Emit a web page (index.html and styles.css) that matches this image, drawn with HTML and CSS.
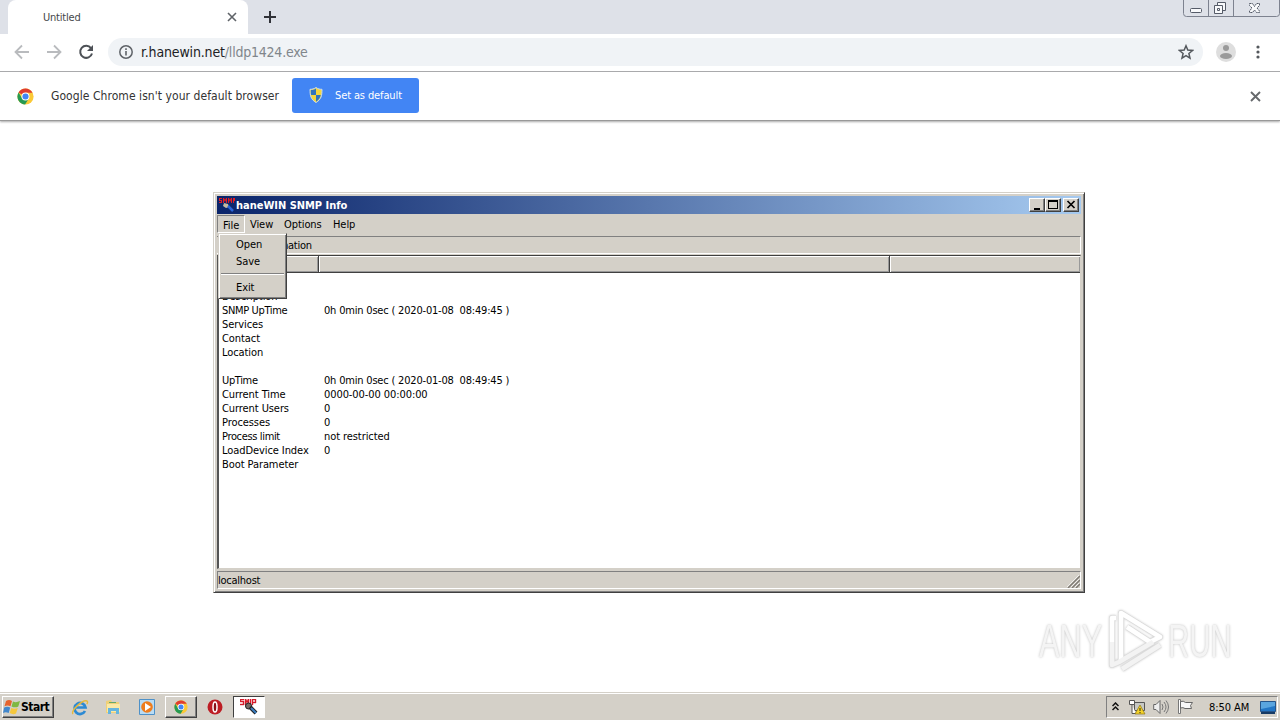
FILE: index.html
```html
<!DOCTYPE html>
<html lang="en">
  <head>
    <meta charset="UTF-8" />
    <title>Untitled</title>
    <link rel="stylesheet" href="styles.css">
  </head>
  <body>
    <div class="browser">
      <div class="tabs">
        <div class="tab">
          <span class="tab-title">Untitled</span>
          <svg class="tab-close" width="10" height="10" viewBox="0 0 10 10"><path d="M1 1l8 8M9 1l-8 8" stroke="#5f6368" stroke-width="1.6" /></svg>
        </div>
        <svg class="new-tab" width="12" height="12" viewBox="0 0 12 12"><path d="M6 0v12M0 6h12" stroke="#303238" stroke-width="2" /></svg>
        <div class="caption">
          <svg width="97" height="17" viewBox="0 0 97 17">
            <path d="M.5 0v13.500q0 3 3 3h90q3 0 3-3V0M25.500 0v16M50.500 0v16" fill="none" stroke="#7d828f" />
            <g fill="#f8f9fb" stroke="#555b68">
              <rect x="7.500" y="8.500" width="11" height="4" rx="1" />
              <path d="M34.500 2.500h8v8h-8z" /><path d="M31.500 5.500h8v8h-8z" /><path d="M34.500 8.500h2v2h-2z" />
              <path d="M66.500 3.500h3l2 3 2-3h3v2l-2.500 2.500 2.500 3v1.500h-3l-2-2.500-2 2.500h-3V11l2.500-3-2.500-2.500z" stroke-dasharray="2 .6" />
            </g>
          </svg>
        </div>
      </div>

      <div class="toolbar">
        <svg class="back" width="16" height="16" viewBox="0 0 16 16"><path d="M15 8H2M8 1.500L1.500 8 8 14.500" fill="none" stroke="#b9bbbe" stroke-width="1.800" /></svg>
        <svg class="forward" width="16" height="16" viewBox="0 0 16 16"><path d="M1 8h13M8 1.500L14.500 8 8 14.500" fill="none" stroke="#b9bbbe" stroke-width="1.800" /></svg>
        <svg class="reload" width="16" height="16" viewBox="0 0 16 16"><path d="M13 4.200A6 6 0 1 0 14 9.500" fill="none" stroke="#4d5156" stroke-width="2" /><path d="M15 1v6H9z" fill="#4d5156" /></svg>
        <div class="address">
          <svg width="14" height="14" viewBox="0 0 14 14"><circle cx="7" cy="7" r="6.200" fill="none" stroke="#5f6368" stroke-width="1.500" /><path d="M7 6v4.500M7 3.300v1.600" stroke="#5f6368" stroke-width="1.600" /></svg>
          <span class="host">r.hanewin.net</span><span class="path">/lldp1424.exe</span>
          <svg class="star" width="16" height="16" viewBox="0 0 16 16"><path d="M8 1.800l1.800 4.300 4.700.4-3.600 3 1.100 4.600L8 11.700l-4 2.400 1.100-4.600-3.600-3 4.700-.4z" fill="none" stroke="#54585d" stroke-width="1.500" /></svg>
        </div>
        <svg class="avatar" width="20" height="20" viewBox="0 0 20 20"><circle cx="10" cy="10" r="10" fill="#dedede" /><circle cx="10" cy="6" r="3" fill="#9a9a9a" /><ellipse cx="10" cy="14" rx="6" ry="3" fill="#9a9a9a" /></svg>
        <svg class="dots" width="4" height="14" viewBox="0 0 4 14"><g fill="#54585d"><circle cx="2" cy="2" r="1.600" /><circle cx="2" cy="7" r="1.600" /><circle cx="2" cy="12" r="1.600" /></g></svg>
      </div>

      <div class="infobar">
        <svg class="logo" width="17" height="17" viewBox="0 0 20 20">
          <circle cx="10" cy="10" r="9.500" fill="#fbc936" />
          <path d="M10 10L1.800 5.200A9.500 9.500 0 0 1 18.200 5.500H10z" fill="#df3c30" />
          <path d="M1.800 5.200A9.500 9.500 0 0 0 9.500 19.500L13.900 12.300 10 10 6 12z" fill="#269a52" />
          <circle cx="10" cy="10" r="4.700" fill="#fff" /><circle cx="10" cy="10" r="3.600" fill="#4285f4" />
        </svg>
        <span class="message">Google Chrome isn't your default browser</span>
        <div class="default-button">
          <svg width="14" height="16" viewBox="0 0 14 16">
            <path d="M7 .5c2 1.500 4 1.800 6 1.800 0 6-.5 10-6 13.200C1.500 12.300 1 8.300 1 2.300c2 0 4-.3 6-1.800z" fill="#f5d63d" stroke="#c8dcec" />
            <path d="M7 1.500C5.500 2.500 3.500 3 1.800 3c0 2 0 3.500.4 5H7zM7 8h4.800c-.7 3-2 5-4.800 6.700z" fill="#3274bd" />
          </svg>
          <span>Set as default</span>
        </div>
        <svg class="info-close" width="11" height="11" viewBox="0 0 11 11"><path d="M1 1l9 9M10 1l-9 9" stroke="#66696c" stroke-width="1.900" /></svg>
      </div>
    </div>

    <div class="watermark">
      <span class="any">ANY</span>
      <svg width="60" height="66" viewBox="0 0 60 66">
        <g fill="none" stroke-linejoin="round">
          <path d="M13 54V5l39 24-10 5L19 19M8 10H4v47l7-3 34-20M14 61l38-24" stroke="#dcdcdc" stroke-width="6" />
          <path d="M13 54V5l39 24-10 5L19 19M8 10H4v24" stroke="#fff" stroke-width="4.500" />
          <path d="M4 34v23l7-3 34-20M14 61l38-24" stroke="#f3f3f3" stroke-width="4.500" />
        </g>
      </svg>
      <span class="run">RUN</span>
    </div>

    <div class="window">
      <div class="title-bar">
        <svg class="snmp" width="16" height="16" viewBox="0 0 16 16">
          <path d="M0 1h3v1H1v1h2v3H0V5h2V4H0zM4 6V1h1l1 2 1-2h1v5H7V3L6 5 5 3v3zM9 1h1l1 2 1-2h1v5h-1V3l-1 2-1-2v3H9zM14 1h2v3h-1v2h-1z" fill="#e31b23" />
          <path d="M5 6l4 1 1 3-3 1-3-2z" fill="#c6b9a0" /><path d="M9 9l5 5" stroke="#2b64d8" stroke-width="2.500" />
        </svg>
        <span class="title-text">haneWIN SNMP Info</span>
        <div class="control"><svg width="14" height="12"><path d="M4 9h6v2H4z" /></svg></div>
        <div class="control"><svg width="14" height="12"><path d="M2 1h10v9H2zM3 3v6h8V3z" fill-rule="evenodd" /></svg></div>
        <div class="control close"><svg width="14" height="12"><path d="M3.500 2l7 7M10.500 2l-7 7" stroke="#000" stroke-width="1.700" /></svg></div>
      </div>

      <div class="menu-bar">
        <span class="menu-item active">File</span>
        <span class="menu-item view">View</span>
        <span class="menu-item options">Options</span>
        <span class="menu-item help">Help</span>
      </div>

      <div class="caption-row"><span>System Information</span></div>

      <div class="list">
        <div class="list-header"><div></div><div></div><div></div></div>
        <div class="rows">
          <div class="row"></div>
          <div class="row"><span>Description</span></div>
          <div class="row"><span class="narrow">SNMP UpTime</span><span class="stamp">0h 0min 0sec ( 2020-01-08&nbsp; 08:49:45 )</span></div>
          <div class="row"><span>Services</span></div>
          <div class="row"><span>Contact</span></div>
          <div class="row"><span>Location</span></div>
          <div class="row"></div>
          <div class="row"><span class="narrow">UpTime</span><span class="stamp">0h 0min 0sec ( 2020-01-08&nbsp; 08:49:45 )</span></div>
          <div class="row"><span>Current Time</span><span>0000-00-00 00:00:00</span></div>
          <div class="row"><span>Current Users</span><span>0</span></div>
          <div class="row"><span>Processes</span><span>0</span></div>
          <div class="row"><span class="narrow">Process limit</span><span>not restricted</span></div>
          <div class="row"><span>LoadDevice Index</span><span>0</span></div>
          <div class="row"><span>Boot Parameter</span></div>
        </div>
      </div>

      <div class="status">
        <span>localhost</span>
        <svg width="13" height="13" viewBox="0 0 13 13"><path d="M1 13L13 1M5 13l8-8M9 13l4-4" stroke="#807c75" stroke-width="1.500" /><path d="M0 12L12 0M4 12l8-8M8 12l4-4" stroke="#fff" stroke-width=".7" /></svg>
      </div>

      <div class="dropdown">
        <span>Open</span>
        <span>Save</span>
        <hr />
        <span>Exit</span>
      </div>
    </div>

    <div class="taskbar">
      <div class="start">
        <svg width="18" height="16" viewBox="0 0 18 16">
          <path d="M3 2q3-2 6 0L7.500 7.300q-3-1.500-6 0z" fill="#e6632d" /><path d="M10 2.500q3 1.500 7-.5l-1.700 5.500q-3 1.700-6.800 0z" fill="#7fb842" />
          <path d="M1.200 8.500q3-1.500 6 0L5.700 14q-3-1.700-5.700 0z" fill="#4287cc" /><path d="M8.300 9q3 1.500 6.500 0L13 14.500q-3 1.500-6.300-.5z" fill="#f5c73c" />
        </svg>
        <span>Start</span>
      </div>
      <svg class="ie" width="18" height="17" viewBox="0 0 18 17">
        <path d="M14 12a5.500 5.500 0 1 1 .5-3.500H4.500" fill="none" stroke="#2d8ad3" stroke-width="2.700" />
        <path d="M2 15C-1 12 12 0 16 2c1 .6.500 2-.2 3" fill="none" stroke="#e6b93d" stroke-width="1.400" />
      </svg>
      <svg class="explorer" width="16" height="16" viewBox="0 0 16 16">
        <path d="M1 2l5-1 1 2h7v11H1z" fill="#efd078" /><path d="M2 5h13v8H2z" fill="#fae9a6" /><path d="M3 9h11v6h-3v-3H6v3H3z" fill="#66b5de" /><path d="M4 3h7v1H4z" fill="#65a96a" />
      </svg>
      <svg class="player" width="16" height="16" viewBox="0 0 16 16">
        <path d="M.5.500h15v15H.5z" fill="#b9dcf4" stroke="#4e91c8" /><circle cx="8" cy="8" r="5.800" fill="#ef7d1d" /><path d="M6 4l6 4-6 4z" fill="#fff" />
      </svg>
      <div class="task">
        <svg width="14" height="14" viewBox="0 0 20 20">
          <circle cx="10" cy="10" r="9.500" fill="#fbc936" />
          <path d="M10 10L1.800 5.200A9.500 9.500 0 0 1 18.200 5.500H10z" fill="#df3c30" />
          <path d="M1.800 5.200A9.500 9.500 0 0 0 9.500 19.500L13.900 12.300 10 10 6 12z" fill="#269a52" />
          <circle cx="10" cy="10" r="4.700" fill="#fff" /><circle cx="10" cy="10" r="3.600" fill="#4285f4" />
        </svg>
      </div>
      <svg class="opera" width="16" height="16" viewBox="0 0 16 16"><circle cx="8" cy="8" r="7.500" fill="#bd1d24" /><ellipse cx="8" cy="8" rx="2" ry="5" fill="#8c1016" stroke="#fff" stroke-width="1.500" /></svg>
      <div class="task pressed">
        <svg width="18" height="16" viewBox="0 0 18 16">
          <path d="M0 0h4v1H1v1h3v4H0V5h3V3H0zM5 6V0h1l1 2 1-2h1v6H8V3L7 4 6 3v3zM10 0h1v6h-1zM12 0h4v4h-3v2h-1zM13 1v2h2V1z" fill="#d51d28" stroke="#d51d28" stroke-width=".4" />
          <circle cx="8.500" cy="7" r="3" fill="#776b65" stroke="#222" /><path d="M10 8l6 6" stroke="#222" stroke-width="4" /><path d="M11 9l5 5" stroke="#3b7fc2" stroke-width="2" />
        </svg>
      </div>

      <div class="tray">
        <svg class="chevrons" width="7" height="10" viewBox="0 0 7 10"><path d="M.5 4l3-3 3 3M.5 8l3-3 3 3" fill="none" stroke="#111" stroke-width="1.500" /></svg>
        <svg class="network" width="17" height="16" viewBox="0 0 17 16">
          <path d="M5.500 3.500h10v8h-10z" fill="#c7c8c4" stroke="#555" /><path d="M5 14h8" stroke="#555" /><path d="M.5 1.500h5v4h-5zM3 5.500v9h4" fill="#fff" stroke="#555" />
          <path d="M11 6l5 9H6z" fill="#f4d228" stroke="#8d7617" stroke-width=".7" /><path d="M11 9v3M11 13v1.200" stroke="#222" />
        </svg>
        <svg class="volume" width="17" height="16" viewBox="0 0 17 16"><path d="M.7 5.500H3l4-4v13l-4-4H.7z" fill="#eee" stroke="#666" /><path d="M9 5q2 3 0 6M11 3q4 5 0 10M13 1.500q5 6.500 0 13" fill="none" stroke="#777" /></svg>
        <svg class="flag" width="17" height="16" viewBox="0 0 17 16"><path d="M1.500.500h2v14h-2z" fill="#fff" stroke="#777" /><path d="M3.500 2.500q3-1 5 1h7l-2 3 1 3H8q-2-1.500-4.500-.5z" fill="#f8f8f8" stroke="#666" /></svg>
        <span>8:50 AM</span>
        <svg class="desktop" width="16" height="14" viewBox="0 0 16 14"><path d="M.5 1.500h15v10H.5z" fill="#2376c5" stroke="#26558b" /><path d="M1 2h14v4L1 9z" fill="#5aa5df" /><path d="M1 12h14v2H1z" fill="#173b65" /></svg>
      </div>
    </div>
  </body>
</html>
```

FILE: styles.css
```css
* {
  box-sizing: border-box;
}

body {
  width: 1280px;
  height: 720px;
  margin: 0;
  overflow: hidden;
  display: flex;
  flex-direction: column;
  background: #fff;
  font-family: 'DejaVu Sans Condensed', 'DejaVu Sans', sans-serif;
  font-size: 11px;
  letter-spacing: -0.08px;
  color: #000;
  white-space: nowrap;
}

svg {
  display: block;
  flex: none;
}

.browser {
  height: 692px;
}

.tabs {
  height: 34px;
  display: flex;
  align-items: center;
  background: #dee1e8;
  padding-left: 8px;
}

.tab {
  width: 240px;
  height: 34px;
  display: flex;
  align-items: center;
  justify-content: space-between;
  padding: 0 11px 0 35px;
  background: #fff;
  border-radius: 8px 8px 0 0;
}

.tab-title {
  color: #45474a;
  letter-spacing: -0.2px;
}

.new-tab {
  margin-left: 16px;
}

.caption {
  margin-left: auto;
  align-self: flex-start;
}

.toolbar {
  height: 38px;
  display: flex;
  align-items: center;
  border-bottom: 1px solid #a9abad;
  padding: 0 20px 1px 14px;
}

.forward {
  margin-left: 16px;
}

.reload {
  margin-left: 16px;
}

.address {
  width: 1095px;
  height: 28px;
  margin-left: 14px;
  padding: 0 9px 0 11px;
  display: flex;
  align-items: center;
  border-radius: 14px;
  background: #f0f3f6;
  font-size: 14px;
}

.host {
  margin-left: 8px;
  color: #202124;
  letter-spacing: -0.15px;
}

.path {
  color: #80868b;
  letter-spacing: -0.22px;
}

.star {
  margin-left: auto;
}

.avatar {
  margin-left: 13px;
}

.dots {
  margin-left: 20px;
}

.infobar {
  height: 49px;
  display: flex;
  align-items: center;
  padding: 0 19px 0 17px;
  border-bottom: 1px solid #999;
  box-shadow: 0 1px 2px #aaa;
}

.message {
  width: 228px;
  margin-left: 17px;
  font-size: 12px;
  letter-spacing: 0.06px;
  color: #333;
}

.default-button {
  width: 127px;
  height: 35px;
  margin: 0 0 2px 13px;
  padding-left: 17px;
  display: flex;
  align-items: center;
  gap: 12px;
  border-radius: 3px;
  background: #4285f4;
  color: #fff;
  letter-spacing: -0.12px;
}

.info-close {
  margin-left: auto;
}

.watermark {
  position: absolute;
  left: 1039px;
  top: 608px;
  height: 66px;
  display: flex;
  align-items: center;
  font-family: 'Liberation Sans', sans-serif;
  font-size: 46px;
  letter-spacing: 0;
  color: #f4f4f4;
  text-shadow: 0 0 3px #bbb;
}

.watermark svg {
  margin-left: 2px;
  filter: drop-shadow(0 0 1px #ccc);
}

.watermark span {
  width: 67px;
  transform: scaleX(0.67);
  transform-origin: left;
}

.watermark .run {
  transform: scaleX(0.64);
}

.window {
  position: absolute;
  left: 213px;
  top: 192px;
  width: 872px;
  height: 401px;
  padding: 2px 2px 1px 2px;
  background: #d4d0c8;
  border: 1px solid #404040;
  border-left-color: #d4d0c8;
  border-top-color: #d4d0c8;
  box-shadow: inset 1px 1px #fff, inset -1px -1px #808080;
}

.title-bar {
  height: 18px;
  margin: 1px 1px 0;
  padding: 0 2px;
  display: flex;
  align-items: center;
  background: linear-gradient(to right, #0a246a, #a6caf0);
  color: #fff;
  font-weight: bold;
  letter-spacing: -0.02px;
}

.title-text {
  margin: 0 auto 0 1px;
}

.control {
  width: 16px;
  height: 14px;
  background: #d4d0c8;
  border: 1px solid #404040;
  border-left-color: #fff;
  border-top-color: #fff;
  box-shadow: inset -1px -1px #808080;
}

.close {
  margin-left: 2px;
}

.menu-bar {
  height: 20px;
  margin-left: 1px;
  display: flex;
  align-items: center;
}

.menu-item {
  flex: none;
}

.active {
  width: 28px;
  height: 18px;
  padding: 3px 0 0 5px;
  border: 1px solid #fff;
  border-left-color: #808080;
  border-top-color: #808080;
}

.view {
  margin-left: 5px;
  width: 34px;
}

.options {
  width: 49px;
}

.caption-row {
  height: 18px;
  margin: 2px 1px 0;
  padding: 2px 0 0 2px;
  border-top: 1px solid #808080;
  border-right: 1px solid #fff;
  border-bottom: 1px solid #fff;
  letter-spacing: -0.25px;
}

.list {
  height: 314px;
  margin: 1px 1px 0;
  background: #fff;
  border: 1px solid #d4d0c8;
  border-left: 2px solid #555;
  border-top: 1px solid #404040;
}

.list-header {
  height: 17px;
  display: grid;
  grid-template-columns: 100px 571px 1fr;
}

.list-header div {
  background: #d4d0c8;
  border-right: 1px solid #404040;
  border-bottom: 1px solid #404040;
  box-shadow: inset 1px 1px #fff, inset -1px -1px #999;
}

.list-header div:last-child {
  border-right: 0;
}

.rows {
  padding: 3px 0 0 3px;
}

.row {
  height: 14px;
  line-height: 14px;
  display: grid;
  grid-template-columns: 102px 1fr;
}

.narrow {
  letter-spacing: -0.35px;
}

.stamp {
  letter-spacing: -0.19px;
}

.status {
  height: 18px;
  margin: 2px 1px 0;
  display: flex;
  align-items: center;
  justify-content: space-between;
  border: 1px solid #fff;
  border-top-color: #808080;
  border-left-color: #808080;
  letter-spacing: -0.25px;
}

.status svg {
  align-self: flex-end;
}

.dropdown {
  position: absolute;
  left: 4px;
  top: 40px;
  width: 69px;
  height: 66px;
  padding: 2px 1px;
  display: flex;
  flex-direction: column;
  background: #d4d0c8;
  border: 1px solid #404040;
  border-left-color: #d4d0c8;
  border-top-color: #d4d0c8;
  box-shadow: inset 1px 1px #fff, inset -1px -1px #808080;
}

.dropdown span {
  height: 17px;
  line-height: 17px;
  padding-left: 16px;
}

.dropdown hr {
  width: 63px;
  margin: 3px 1px 4px;
  border: 0;
  border-top: 1px solid #808080;
  border-bottom: 1px solid #fff;
}

.taskbar {
  height: 28px;
  display: flex;
  align-items: center;
  padding: 1px 2px 0;
  background: #d4d0c8;
  border-top: 1px solid #d4d0c8;
  box-shadow: inset 0 1px #fff;
}

.start {
  width: 52px;
  height: 22px;
  display: flex;
  align-items: center;
  border: 1px solid #404040;
  border-left-color: #fff;
  border-top-color: #fff;
  box-shadow: inset -1px -1px #808080;
  font-size: 12px;
  font-weight: bold;
  letter-spacing: -0.5px;
}

.ie {
  margin-left: 17px;
}

.explorer {
  margin-left: 16px;
}

.player {
  margin-left: 18px;
}

.task {
  width: 32px;
  height: 22px;
  margin-left: 10px;
  display: flex;
  align-items: center;
  justify-content: center;
  border: 1px solid #404040;
  border-left-color: #fff;
  border-top-color: #fff;
  box-shadow: inset -1px -1px #808080;
}

.opera {
  margin-left: 10px;
}

.pressed {
  background: #fff;
  border-color: #404040 #fff #fff #404040;
  box-shadow: none;
}

.tray {
  width: 172px;
  height: 22px;
  margin-left: auto;
  padding-left: 5px;
  display: flex;
  align-items: center;
  border: 1px solid #fff;
  border-left-color: #808080;
  border-top-color: #808080;
}

.network {
  margin-left: 10px;
}

.volume,
.flag {
  margin-left: 7px;
}

.tray span {
  width: 42px;
  margin-left: 15px;
}

.desktop {
  margin-left: 9px;
}
```
